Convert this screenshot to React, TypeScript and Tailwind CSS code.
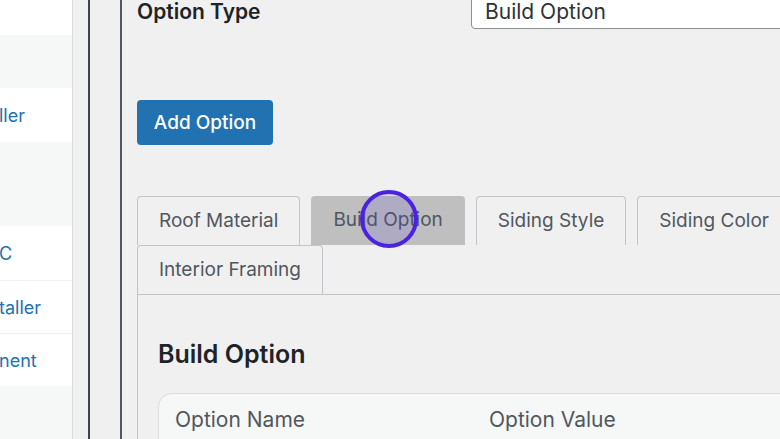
const sideRows = [
  { h: "h-[35px]", bg: "bg-white", text: "" },
  { h: "h-[53px]", bg: "bg-[#f6f7f7]", text: "" },
  { h: "h-[54px]", bg: "bg-white", text: "ller" },
  { h: "h-[84px]", bg: "bg-[#f6f7f7]", text: "" },
  { h: "h-[54px]", bg: "bg-white", text: "C" },
  { h: "h-[53px]", bg: "bg-white border-t border-[#f0f0f1]", text: "taller" },
  { h: "h-[53px]", bg: "bg-white border-t border-[#f0f0f1]", text: "nent" },
]

const tabs = ["Roof Material", "Build Option", "Siding Style", "Siding Color", "Interior Framing"]

const App = () => {
  return (
    <div className="relative h-[439px] w-[780px] overflow-hidden bg-[#f0f0f1] flex font-['Inter',sans-serif]">
      {/* Left list */}
      <aside className="w-[73px] shrink-0 bg-[#f6f7f7] border-r border-[#dcdcde] flex flex-col overflow-hidden">
        {sideRows.map((row, i) => (
          <div key={i} className={`${row.h} ${row.bg} shrink-0 flex items-center`}>
            {row.text && <span className="-ml-[1px] text-[18px] text-[#2271b1] whitespace-nowrap">{row.text}</span>}
          </div>
        ))}
      </aside>

      {/* Divider strips */}
      <div className="w-[15px] shrink-0" />
      <div className="w-[2px] shrink-0 bg-[#3c434a]" />
      <div className="w-[30px] shrink-0" />
      <div className="w-[2px] shrink-0 bg-[#50575e]" />

      {/* Main */}
      <main className="shrink-0 w-[760px] pl-[15px]">
        <div className="-mt-[6px] h-[35px] flex items-center">
          <div className="w-[334px] text-[21px] font-semibold text-[#1d2327]">Option Type</div>
          <div className="flex-1 h-[35px] bg-white border border-[#8c8f94] rounded-[4px] flex items-center pl-[13px] text-[21px] text-[#2c3338]">
            Build Option
          </div>
        </div>

        <button className="mt-[71px] w-[136px] h-[45px] rounded-[4px] bg-[#2271b1] text-white text-[19px] font-medium pt-[2px]">
          Add Option
        </button>

        <div className="mt-[51px] flex flex-wrap">
          {tabs.map((t) => (
            <div
              key={t}
              className={
                t === "Build Option"
                  ? "h-[49px] mr-[11px] px-[22px] flex items-center rounded-t-[4px] bg-[#bfbfbf] text-[19px] text-[#50575e] whitespace-nowrap"
                  : "h-[49px] mr-[11px] px-[21px] flex items-center rounded-t-[4px] border-t border-l border-r border-[#c3c4c7] bg-[#f0f0f1] text-[19px] text-[#50575e] whitespace-nowrap"
              }
            >
              {t}
            </div>
          ))}
        </div>

        <section className="border-t border-l border-[#c3c4c7] pl-[20px] pt-[45px] h-[200px]">
          <h2 className="text-[25px] leading-[28px] font-semibold text-[#1d2327]">Build Option</h2>
          <div className="mt-[25px] rounded-tl-[14px] border border-[#dcdcde] bg-[#f6f7f7] pl-[16px] pt-[10px] h-[80px]">
            <div className="flex text-[21px] text-[#50575e]">
              <span className="w-[314px]">Option Name</span>
              <span>Option Value</span>
            </div>
          </div>
        </section>
      </main>

      {/* Click highlight */}
      <div className="absolute left-[360px] top-[190px] w-[58px] h-[58px] rounded-full border-[4px] border-[#4a22e0] bg-[rgba(90,60,220,0.15)]" />
    </div>
  )
}

export default App
